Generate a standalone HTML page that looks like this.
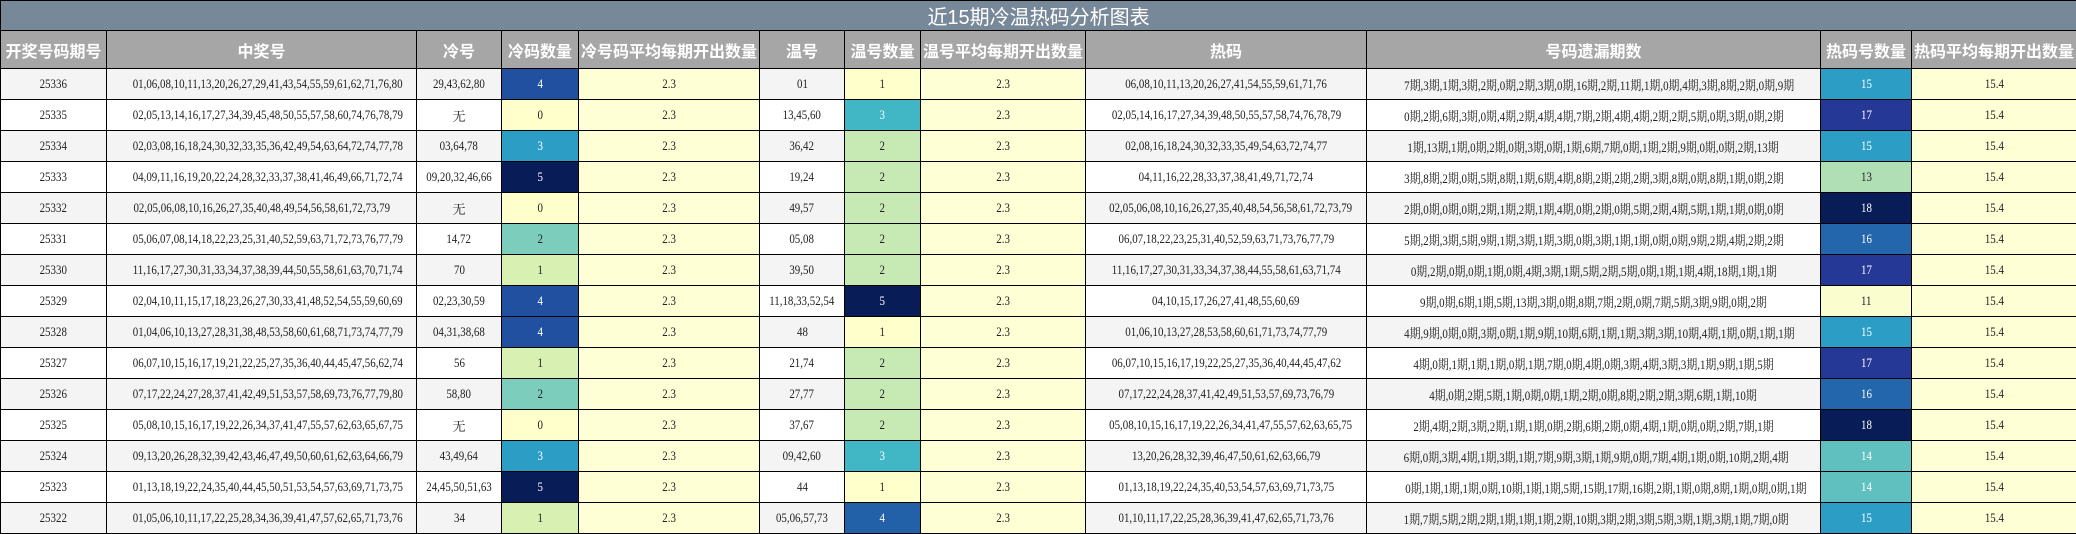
<!DOCTYPE html>
<html><head><meta charset="utf-8"><style>
body{margin:0;background:#fff;width:2076px;height:532px;overflow:hidden}
table{border-collapse:collapse;table-layout:fixed;width:2076px;font-family:"Liberation Serif","Noto Serif CJK SC",serif;font-size:13px;color:#222}
td,th{border:1px solid #000;text-align:center;padding:0;white-space:nowrap;overflow:hidden}
.t td{background:#778899;color:#fff;font-family:"Liberation Sans","Noto Sans CJK SC",sans-serif;font-size:20px;height:27px}
th{background:#a6a6a6;color:#fff;font-family:"Liberation Sans","Noto Sans CJK SC",sans-serif;font-size:16px;font-weight:bold;height:37px}
tr.r td{height:30px}
tr.a td{background:#f4f4f4}
tr.b td{background:#fff}
tr.r td.y{background:#ffffd6}
.s{display:inline-block;transform:scaleX(.84)}
.w{color:#fff}
tr.r td.c0{background:#ffffcc}tr.r td.c1{background:#d9f0b3}tr.r td.c2{background:#7ccdbb}tr.r td.c3{background:#2c9ec5;color:#fff}tr.r td.c3w{background:#41b6c4;color:#fff}tr.r td.c4{background:#2250a0;color:#fff}tr.r td.c4w{background:#2260a8;color:#fff}tr.r td.c5{background:#081d58;color:#fff}tr.r td.w1{background:#ffffcc}tr.r td.w2{background:#c7e9b4}
tr.r td.h11{background:#fafdce}tr.r td.h13{background:#b0dfb6}tr.r td.h14{background:#60c0bf;color:#fff}tr.r td.h15{background:#2c9ec5;color:#fff}tr.r td.h16{background:#2466ab;color:#fff}tr.r td.h17{background:#263896;color:#fff}tr.r td.h18{background:#081d58;color:#fff}
</style></head><body>
<table>
<colgroup><col style="width:106px"><col style="width:310px"><col style="width:85px"><col style="width:77px"><col style="width:181px"><col style="width:85px"><col style="width:76px"><col style="width:165px"><col style="width:281px"><col style="width:454px"><col style="width:91px"><col style="width:165px"></colgroup>
<tr class="t"><td colspan="12">近15期冷温热码分析图表</td></tr>
<tr><th>开奖号码期号</th><th>中奖号</th><th>冷号</th><th>冷码数量</th><th>冷号码平均每期开出数量</th><th>温号</th><th>温号数量</th><th>温号平均每期开出数量</th><th>热码</th><th>号码遗漏期数</th><th>热码号数量</th><th>热码平均每期开出数量</th></tr>
<tr class="r a"><td><span class="s">25336</span></td><td><span class="s">01,06,08,10,11,13,20,26,27,29,41,43,54,55,59,61,62,71,76,80</span></td><td><span class="s">29,43,62,80</span></td><td class="c4"><span class="s">4</span></td><td class="y"><span class="s">2.3</span></td><td><span class="s">01</span></td><td class="w1"><span class="s">1</span></td><td class="y"><span class="s">2.3</span></td><td><span class="s">06,08,10,11,13,20,26,27,41,54,55,59,61,71,76</span></td><td><span class="s">7期,3期,1期,3期,2期,0期,2期,3期,0期,16期,2期,11期,1期,0期,4期,3期,8期,2期,0期,9期</span></td><td class="h15"><span class="s">15</span></td><td class="y"><span class="s">15.4</span></td></tr>
<tr class="r b"><td><span class="s">25335</span></td><td><span class="s">02,05,13,14,16,17,27,34,39,45,48,50,55,57,58,60,74,76,78,79</span></td><td>无</td><td class="c0"><span class="s">0</span></td><td class="y"><span class="s">2.3</span></td><td><span class="s">13,45,60</span></td><td class="c3w"><span class="s">3</span></td><td class="y"><span class="s">2.3</span></td><td><span class="s">02,05,14,16,17,27,34,39,48,50,55,57,58,74,76,78,79</span></td><td><span class="s">0期,2期,6期,3期,0期,4期,2期,4期,4期,7期,2期,4期,4期,2期,2期,5期,0期,3期,0期,2期</span></td><td class="h17"><span class="s">17</span></td><td class="y"><span class="s">15.4</span></td></tr>
<tr class="r a"><td><span class="s">25334</span></td><td><span class="s">02,03,08,16,18,24,30,32,33,35,36,42,49,54,63,64,72,74,77,78</span></td><td><span class="s">03,64,78</span></td><td class="c3"><span class="s">3</span></td><td class="y"><span class="s">2.3</span></td><td><span class="s">36,42</span></td><td class="w2"><span class="s">2</span></td><td class="y"><span class="s">2.3</span></td><td><span class="s">02,08,16,18,24,30,32,33,35,49,54,63,72,74,77</span></td><td><span class="s">1期,13期,1期,0期,2期,0期,3期,0期,1期,6期,7期,0期,1期,2期,9期,0期,0期,2期,13期</span></td><td class="h15"><span class="s">15</span></td><td class="y"><span class="s">15.4</span></td></tr>
<tr class="r b"><td><span class="s">25333</span></td><td><span class="s">04,09,11,16,19,20,22,24,28,32,33,37,38,41,46,49,66,71,72,74</span></td><td><span class="s">09,20,32,46,66</span></td><td class="c5"><span class="s">5</span></td><td class="y"><span class="s">2.3</span></td><td><span class="s">19,24</span></td><td class="w2"><span class="s">2</span></td><td class="y"><span class="s">2.3</span></td><td><span class="s">04,11,16,22,28,33,37,38,41,49,71,72,74</span></td><td><span class="s">3期,8期,2期,0期,5期,8期,1期,6期,4期,8期,2期,2期,2期,3期,8期,0期,8期,1期,0期,2期</span></td><td class="h13"><span class="s">13</span></td><td class="y"><span class="s">15.4</span></td></tr>
<tr class="r a"><td><span class="s">25332</span></td><td><span class="s">02,05,06,08,10,16,26,27,35,40,48,49,54,56,58,61,72,73,79</span></td><td>无</td><td class="c0"><span class="s">0</span></td><td class="y"><span class="s">2.3</span></td><td><span class="s">49,57</span></td><td class="w2"><span class="s">2</span></td><td class="y"><span class="s">2.3</span></td><td><span class="s">02,05,06,08,10,16,26,27,35,40,48,54,56,58,61,72,73,79</span></td><td><span class="s">2期,0期,0期,0期,2期,1期,2期,1期,4期,0期,2期,0期,5期,2期,4期,5期,1期,1期,0期,0期</span></td><td class="h18"><span class="s">18</span></td><td class="y"><span class="s">15.4</span></td></tr>
<tr class="r b"><td><span class="s">25331</span></td><td><span class="s">05,06,07,08,14,18,22,23,25,31,40,52,59,63,71,72,73,76,77,79</span></td><td><span class="s">14,72</span></td><td class="c2"><span class="s">2</span></td><td class="y"><span class="s">2.3</span></td><td><span class="s">05,08</span></td><td class="w2"><span class="s">2</span></td><td class="y"><span class="s">2.3</span></td><td><span class="s">06,07,18,22,23,25,31,40,52,59,63,71,73,76,77,79</span></td><td><span class="s">5期,2期,3期,5期,9期,1期,3期,1期,3期,0期,3期,1期,1期,0期,0期,9期,2期,4期,2期,2期</span></td><td class="h16"><span class="s">16</span></td><td class="y"><span class="s">15.4</span></td></tr>
<tr class="r a"><td><span class="s">25330</span></td><td><span class="s">11,16,17,27,30,31,33,34,37,38,39,44,50,55,58,61,63,70,71,74</span></td><td><span class="s">70</span></td><td class="c1"><span class="s">1</span></td><td class="y"><span class="s">2.3</span></td><td><span class="s">39,50</span></td><td class="w2"><span class="s">2</span></td><td class="y"><span class="s">2.3</span></td><td><span class="s">11,16,17,27,30,31,33,34,37,38,44,55,58,61,63,71,74</span></td><td><span class="s">0期,2期,0期,0期,1期,0期,4期,3期,1期,5期,2期,5期,0期,1期,1期,4期,18期,1期,1期</span></td><td class="h17"><span class="s">17</span></td><td class="y"><span class="s">15.4</span></td></tr>
<tr class="r b"><td><span class="s">25329</span></td><td><span class="s">02,04,10,11,15,17,18,23,26,27,30,33,41,48,52,54,55,59,60,69</span></td><td><span class="s">02,23,30,59</span></td><td class="c4"><span class="s">4</span></td><td class="y"><span class="s">2.3</span></td><td><span class="s">11,18,33,52,54</span></td><td class="c5"><span class="s">5</span></td><td class="y"><span class="s">2.3</span></td><td><span class="s">04,10,15,17,26,27,41,48,55,60,69</span></td><td><span class="s">9期,0期,6期,1期,5期,13期,3期,0期,8期,7期,2期,0期,7期,5期,3期,9期,0期,2期</span></td><td class="h11"><span class="s">11</span></td><td class="y"><span class="s">15.4</span></td></tr>
<tr class="r a"><td><span class="s">25328</span></td><td><span class="s">01,04,06,10,13,27,28,31,38,48,53,58,60,61,68,71,73,74,77,79</span></td><td><span class="s">04,31,38,68</span></td><td class="c4"><span class="s">4</span></td><td class="y"><span class="s">2.3</span></td><td><span class="s">48</span></td><td class="w1"><span class="s">1</span></td><td class="y"><span class="s">2.3</span></td><td><span class="s">01,06,10,13,27,28,53,58,60,61,71,73,74,77,79</span></td><td><span class="s">4期,9期,0期,0期,3期,0期,1期,9期,10期,6期,1期,1期,3期,3期,10期,4期,1期,0期,1期,1期</span></td><td class="h15"><span class="s">15</span></td><td class="y"><span class="s">15.4</span></td></tr>
<tr class="r b"><td><span class="s">25327</span></td><td><span class="s">06,07,10,15,16,17,19,21,22,25,27,35,36,40,44,45,47,56,62,74</span></td><td><span class="s">56</span></td><td class="c1"><span class="s">1</span></td><td class="y"><span class="s">2.3</span></td><td><span class="s">21,74</span></td><td class="w2"><span class="s">2</span></td><td class="y"><span class="s">2.3</span></td><td><span class="s">06,07,10,15,16,17,19,22,25,27,35,36,40,44,45,47,62</span></td><td><span class="s">4期,0期,1期,1期,1期,0期,1期,7期,0期,4期,0期,3期,4期,3期,3期,1期,9期,1期,5期</span></td><td class="h17"><span class="s">17</span></td><td class="y"><span class="s">15.4</span></td></tr>
<tr class="r a"><td><span class="s">25326</span></td><td><span class="s">07,17,22,24,27,28,37,41,42,49,51,53,57,58,69,73,76,77,79,80</span></td><td><span class="s">58,80</span></td><td class="c2"><span class="s">2</span></td><td class="y"><span class="s">2.3</span></td><td><span class="s">27,77</span></td><td class="w2"><span class="s">2</span></td><td class="y"><span class="s">2.3</span></td><td><span class="s">07,17,22,24,28,37,41,42,49,51,53,57,69,73,76,79</span></td><td><span class="s">4期,0期,2期,5期,1期,0期,0期,1期,2期,0期,8期,2期,2期,3期,6期,1期,10期</span></td><td class="h16"><span class="s">16</span></td><td class="y"><span class="s">15.4</span></td></tr>
<tr class="r b"><td><span class="s">25325</span></td><td><span class="s">05,08,10,15,16,17,19,22,26,34,37,41,47,55,57,62,63,65,67,75</span></td><td>无</td><td class="c0"><span class="s">0</span></td><td class="y"><span class="s">2.3</span></td><td><span class="s">37,67</span></td><td class="w2"><span class="s">2</span></td><td class="y"><span class="s">2.3</span></td><td><span class="s">05,08,10,15,16,17,19,22,26,34,41,47,55,57,62,63,65,75</span></td><td><span class="s">2期,4期,2期,3期,2期,1期,1期,0期,2期,6期,2期,0期,4期,1期,0期,0期,2期,7期,1期</span></td><td class="h18"><span class="s">18</span></td><td class="y"><span class="s">15.4</span></td></tr>
<tr class="r a"><td><span class="s">25324</span></td><td><span class="s">09,13,20,26,28,32,39,42,43,46,47,49,50,60,61,62,63,64,66,79</span></td><td><span class="s">43,49,64</span></td><td class="c3"><span class="s">3</span></td><td class="y"><span class="s">2.3</span></td><td><span class="s">09,42,60</span></td><td class="c3w"><span class="s">3</span></td><td class="y"><span class="s">2.3</span></td><td><span class="s">13,20,26,28,32,39,46,47,50,61,62,63,66,79</span></td><td><span class="s">6期,0期,3期,4期,1期,3期,1期,7期,9期,3期,1期,9期,0期,7期,4期,1期,0期,10期,2期,4期</span></td><td class="h14"><span class="s">14</span></td><td class="y"><span class="s">15.4</span></td></tr>
<tr class="r b"><td><span class="s">25323</span></td><td><span class="s">01,13,18,19,22,24,35,40,44,45,50,51,53,54,57,63,69,71,73,75</span></td><td><span class="s">24,45,50,51,63</span></td><td class="c5"><span class="s">5</span></td><td class="y"><span class="s">2.3</span></td><td><span class="s">44</span></td><td class="w1"><span class="s">1</span></td><td class="y"><span class="s">2.3</span></td><td><span class="s">01,13,18,19,22,24,35,40,53,54,57,63,69,71,73,75</span></td><td><span class="s">0期,1期,1期,1期,0期,10期,1期,1期,5期,15期,17期,16期,2期,1期,0期,8期,1期,0期,0期,1期</span></td><td class="h14"><span class="s">14</span></td><td class="y"><span class="s">15.4</span></td></tr>
<tr class="r a"><td><span class="s">25322</span></td><td><span class="s">01,05,06,10,11,17,22,25,28,34,36,39,41,47,57,62,65,71,73,76</span></td><td><span class="s">34</span></td><td class="c1"><span class="s">1</span></td><td class="y"><span class="s">2.3</span></td><td><span class="s">05,06,57,73</span></td><td class="c4w"><span class="s">4</span></td><td class="y"><span class="s">2.3</span></td><td><span class="s">01,10,11,17,22,25,28,36,39,41,47,62,65,71,73,76</span></td><td><span class="s">1期,7期,5期,2期,2期,1期,1期,1期,2期,10期,3期,2期,3期,5期,3期,1期,3期,1期,7期,0期</span></td><td class="h15"><span class="s">15</span></td><td class="y"><span class="s">15.4</span></td></tr>
</table>
</body></html>
